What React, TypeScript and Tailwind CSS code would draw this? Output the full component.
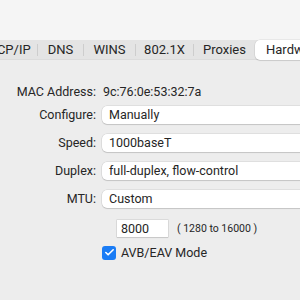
import { Check } from 'lucide-react';

function Popup({ value }: { value: string }) {
  return (
    <div className="flex h-[18px] w-[230px] items-center rounded-[5px] bg-white pl-[7px] shadow-[0_0_0_0.5px_rgba(0,0,0,0.12),0_1px_1px_rgba(0,0,0,0.12)]">
      {value}
    </div>
  );
}

function Row({ label, children }: { label: string; children: React.ReactNode }) {
  return (
    <div className="flex items-center">
      <div className="w-[96px] shrink-0 text-right">{label}</div>
      <div className="ml-[6px] min-w-0 flex-1">{children}</div>
    </div>
  );
}

function Sep() {
  return <span className="h-[12px] w-px shrink-0 bg-[#cdcdcd]" />;
}

export default function App() {
  return (
    <div
      className="h-[300px] w-[300px] overflow-hidden bg-[#ededed] text-[12.5px] leading-[19px] text-[#262626]"
      style={{ fontFamily: 'Roboto, "Liberation Sans", sans-serif' }}
    >
      <div className="h-[40px] bg-[#f5f5f5]" />
      <div className="flex h-[20px] items-center whitespace-nowrap border-b border-[#dcdcdc] bg-[#e4e4e4] text-[13px] -ml-[17px]">
        <span className="w-[54px] shrink-0 text-center">TCP/IP</span>
        <Sep />
        <span className="w-[45px] shrink-0 text-center">DNS</span>
        <Sep />
        <span className="w-[51px] shrink-0 text-center">WINS</span>
        <Sep />
        <span className="w-[57px] shrink-0 text-center">802.1X</span>
        <Sep />
        <span className="w-[61px] shrink-0 text-center">Proxies</span>
        <div className="flex h-[20px] shrink-0 items-center rounded-[5px] bg-white px-[11px] shadow-[0_0_0_0.5px_rgba(0,0,0,0.1),0_1px_1px_rgba(0,0,0,0.1)]">
          Hardware
        </div>
      </div>

      <div className="flex flex-col pt-[22px]">
        <Row label="MAC Address:">
          <span className="pl-[1px]">9c:76:0e:53:32:7a</span>
        </Row>
        <div className="mt-[4px] flex flex-col gap-[9px]">
          <Row label="Configure:">
            <Popup value="Manually" />
          </Row>
          <Row label="Speed:">
            <Popup value="1000baseT" />
          </Row>
          <Row label="Duplex:">
            <Popup value="full-duplex, flow-control" />
          </Row>
          <Row label="MTU:">
            <Popup value="Custom" />
          </Row>
        </div>
        <div className="mt-[11px] flex items-center pl-[117px]">
          <div className="flex h-[17px] w-[51px] items-center bg-white pl-[4px] shadow-[0_0_0_0.5px_rgba(0,0,0,0.15),0_1px_1px_rgba(0,0,0,0.08)]">
            8000
          </div>
          <span className="ml-[9px] text-[10.5px]">( 1280 to 16000 )</span>
        </div>
        <div className="mt-[5px] flex items-center pl-[102px]">
          <div className="flex h-[14px] w-[14px] items-center justify-center rounded-[3px] bg-[#1a7cf5]">
            <Check className="h-[11px] w-[11px] text-white" strokeWidth={3.5} />
          </div>
          <span className="ml-[5px]">AVB/EAV Mode</span>
        </div>
      </div>
    </div>
  );
}
